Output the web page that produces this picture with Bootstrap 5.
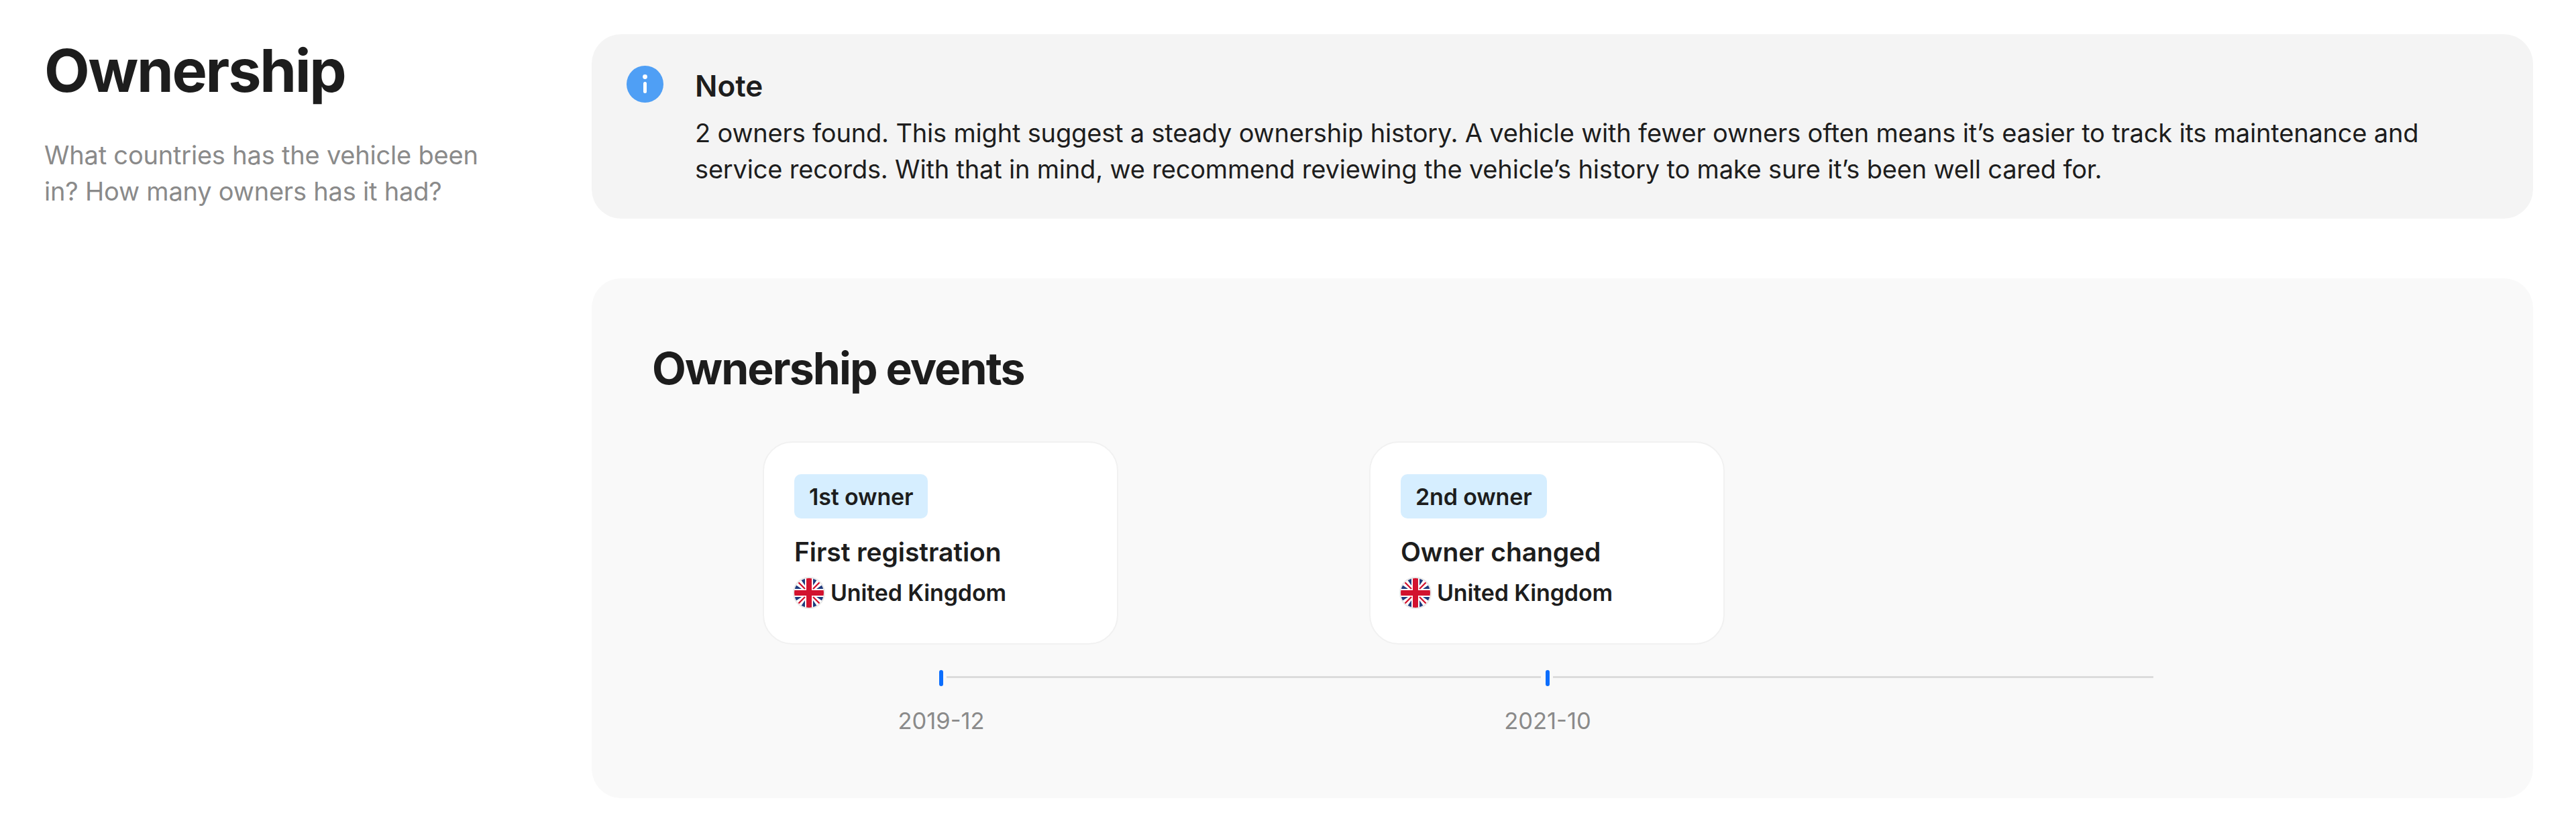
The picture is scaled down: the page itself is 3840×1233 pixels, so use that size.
<!DOCTYPE html>
<html lang="en">
<head>
<meta charset="utf-8">
<title>Ownership</title>
<link href="https://cdn.jsdelivr.net/npm/bootstrap@5.3.0/dist/css/bootstrap.min.css" rel="stylesheet">
<style>
body{font-family:"Inter","Liberation Sans",sans-serif;color:#1d1d1d;background:#fff;height:1233px;overflow:hidden}
.page-wrap{padding:51px 64px 0 66px}
.side-col{width:816px;flex:none}
.side-title{font-size:88px;font-weight:700;line-height:106px;margin:1px 0 0;letter-spacing:-2.3px}
.side-text{font-size:38px;line-height:54px;color:#8a8a8a;margin:46px 0 0;width:680px;letter-spacing:-.2px}
.note-box{background:#f4f4f4;border-radius:44px;height:275px;padding:47px 50px}
.note-ic{width:55px;height:55px;flex:none;margin-right:49px;margin-left:2px}
.note-title{font-size:44px;font-weight:600;line-height:56px;margin:2px 0 15px -2px}
.note-text{font-size:38px;line-height:54px;margin:0 0 0 -2px;letter-spacing:-.18px}
.events-box{background:#f9f9f9;border-radius:44px;height:775px;margin-top:89px;padding:90px 90px 0}
.events-title{font-size:66px;font-weight:700;line-height:88px;margin:0 0 65px;letter-spacing:-1.9px}
.ev-row{padding-left:165px}
.ev-card{width:530px;height:303px;background:#fff;border:2px solid #f1f1f1;border-radius:44px;padding:47px 45px 0;margin-right:374px;flex:none}
.ev-tag{display:inline-block;background:#d6eeff;border-radius:10px;font-size:34px;font-weight:600;line-height:68px;padding:0 22px;height:66px;letter-spacing:-.15px}
.ev-name{font-size:39px;font-weight:600;line-height:48px;margin-top:26px;letter-spacing:-.1px}
.ev-place{font-size:34px;font-weight:600;line-height:48px;margin-top:13px;letter-spacing:-.15px}
.ev-flag{width:48px;height:48px;flex:none;margin:0 8px 0 -2px}
.axis-row{padding-left:428px;margin-top:38px;height:24px}
.axis-seg{width:904px;flex:none}
.axis-seg.last{width:913px}
.axis-tick{width:6px;height:24px;background:#0d6efd;border-radius:3px;flex:none}
.axis-line{height:3px;background:#dcdcdc;flex-grow:1;margin:0 7px 0 5px;transform:translateY(-2px)}
.date-row{margin-left:-21px;margin-top:32px}
.date-cell{width:904px;flex:none;text-align:center;font-size:34.5px;line-height:40px;color:#8a8a8a}
</style>
</head>
<body>
<div class="page-wrap d-flex">
  <div class="side-col">
    <h1 class="side-title">Ownership</h1>
    <p class="side-text">What countries has the vehicle been in? How many owners has it had?</p>
  </div>
  <div class="flex-grow-1">
    <div class="note-box d-flex">
      <svg class="note-ic" viewBox="0 0 55 55"><circle cx="27.5" cy="27.5" r="27.5" fill="#4f9ff5"/><circle cx="27.5" cy="16.5" r="3.4" fill="#fff"/><rect x="25" y="24" width="5" height="17" rx="2.5" fill="#fff"/></svg>
      <div>
        <div class="note-title">Note</div>
        <p class="note-text">2 owners found. This might suggest a steady ownership history. A vehicle with fewer owners often means it’s easier to track its maintenance and service records. With that in mind, we recommend reviewing the vehicle’s history to make sure it’s been well cared for.</p>
      </div>
    </div>
    <div class="events-box">
      <h2 class="events-title">Ownership events</h2>
      <div class="ev-row d-flex">
        <div class="ev-card">
          <span class="ev-tag">1st owner</span>
          <div class="ev-name">First registration</div>
          <div class="ev-place d-flex align-items-center">
            <svg class="ev-flag" viewBox="0 0 48 48"><defs><clipPath id="fc1"><circle cx="24" cy="24" r="22"/></clipPath></defs><circle cx="24" cy="24" r="24" fill="#e8e8e8"/><g clip-path="url(#fc1)"><rect width="48" height="48" fill="#fff"/><path d="M9 0h9v13zM39 0h-9v13zM0 9v9h13zM48 9v9H35zM0 39v-9h13zM48 39v-9H35zM9 48h9V35zM39 48h-9V35z" fill="#1f3a7d"/><path d="M7 7l11 11M41 7 30 18M7 41l11-11M41 41 30 30" stroke="#d2122e" stroke-width="2.4"/><path d="M20 0h8v48h-8zM0 20h48v8H0z" fill="#d2122e"/></g></svg>
            <span>United Kingdom</span>
          </div>
        </div>
        <div class="ev-card">
          <span class="ev-tag">2nd owner</span>
          <div class="ev-name">Owner changed</div>
          <div class="ev-place d-flex align-items-center">
            <svg class="ev-flag" viewBox="0 0 48 48"><defs><clipPath id="fc2"><circle cx="24" cy="24" r="22"/></clipPath></defs><circle cx="24" cy="24" r="24" fill="#e8e8e8"/><g clip-path="url(#fc2)"><rect width="48" height="48" fill="#fff"/><path d="M9 0h9v13zM39 0h-9v13zM0 9v9h13zM48 9v9H35zM0 39v-9h13zM48 39v-9H35zM9 48h9V35zM39 48h-9V35z" fill="#1f3a7d"/><path d="M7 7l11 11M41 7 30 18M7 41l11-11M41 41 30 30" stroke="#d2122e" stroke-width="2.4"/><path d="M20 0h8v48h-8zM0 20h48v8H0z" fill="#d2122e"/></g></svg>
            <span>United Kingdom</span>
          </div>
        </div>
      </div>
      <div class="axis-row d-flex">
        <div class="axis-seg d-flex align-items-center"><div class="axis-tick"></div><div class="axis-line"></div></div>
        <div class="axis-seg last d-flex align-items-center"><div class="axis-tick"></div><div class="axis-line"></div></div>
      </div>
      <div class="date-row d-flex">
        <div class="date-cell">2019-12</div>
        <div class="date-cell">2021-10</div>
      </div>
    </div>
  </div>
</div>
<script src="https://cdn.jsdelivr.net/npm/bootstrap@5.3.0/dist/js/bootstrap.bundle.min.js"></script>
</body>
</html>
